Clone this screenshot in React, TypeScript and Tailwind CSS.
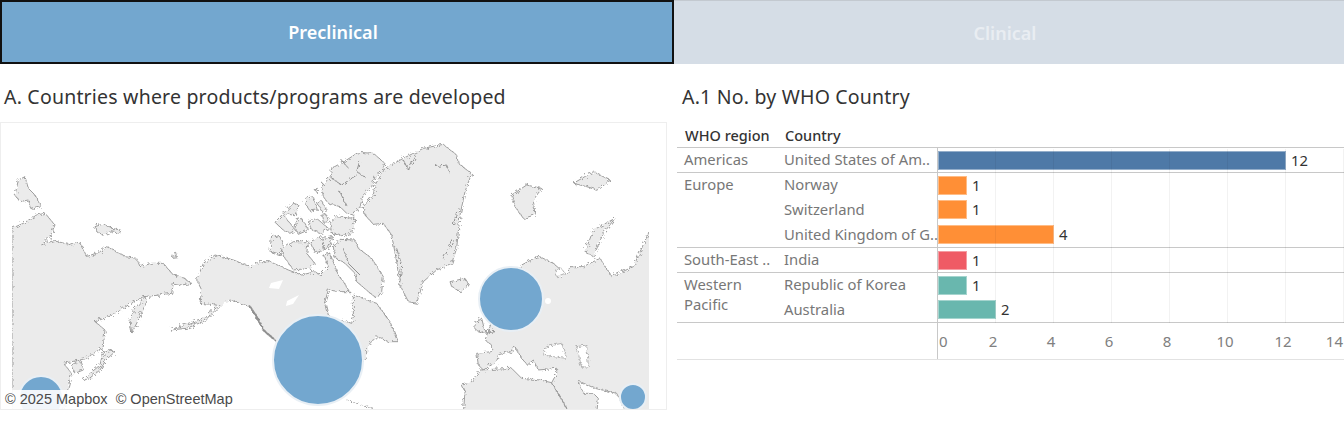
// map traced at 3x, each list in the coordinates of its own crop
const asia = [
  "36,325 70,310 110,285 135,280 165,315 150,350 125,375 160,362 215,375 240,365 260,410 300,395 320,380 350,395 375,410 410,415 420,440 455,430 490,430 520,465 545,470 575,490 545,495 520,490 515,520 480,525 430,530 385,555 340,585 285,605 315,630 310,680 260,715 240,720 190,730 215,760 205,800 190,880 36,880",
  "45,225 55,180 75,170 85,205 105,225 125,260 95,268 85,240 60,245",
  "285,320 310,312 335,325 362,330 360,340 335,335 310,345 290,335",
  "515,405 530,400 532,410 515,412",
  "390,600 400,570 435,530 440,545 415,600 395,640",
  "250,778 300,735 308,700 330,690 345,695 318,720 300,750 262,780",
  "240,720 250,750 225,760 215,735",
  "590,480 610,430 645,405 700,420 750,440 780,425 810,425 865,450 905,465 945,455 960,465 985,440 970,405 990,400 1015,465 1030,485 1050,515 1020,515 985,510 975,545 985,585 1010,600 1040,605 1055,610 1060,590 1060,530 1065,525 1100,540 1130,550 1170,605 1195,665 1165,665 1130,650 1100,680 1100,710 1090,720 1000,760 900,800 850,700 825,660 790,630 750,560 690,540 660,560 620,600 560,625 510,630 620,590 650,555 600,550 605,510",
];

const arctic = [
  "185,155 210,125 215,100 260,75 295,52 340,55 375,85 365,110 345,125 335,155 310,180 300,215 280,240 260,235 240,215 205,205 190,185",
  "310,215 340,180 345,150 375,100 430,70 490,40 550,28 590,60 595,85 635,115 615,170 600,240 590,340 575,385 530,405 490,440 470,505 445,500 420,450 410,380 395,300 370,265 340,268 315,240",
  "137,190 160,185 172,225 150,228 135,205",
  "172,205 185,197 200,225 190,235",
  "165,165 172,160 172,175",
  "45,262 70,235 100,205 117,210 105,240 85,235 75,245 105,285 90,295 70,285",
  "110,255 125,250 145,285 115,298 105,280",
  "145,260 170,250 205,280 185,295 155,285",
  "210,265 225,245 285,250 275,295 245,302 215,295",
  "185,240 200,240 205,260 190,262",
  "35,300 60,305 70,330 60,360 30,350",
  "65,345 100,320 145,320 140,355 165,385 150,400 100,405 75,370",
  "150,320 185,305 190,345 165,355",
  "190,310 220,305 205,340 190,340",
  "220,335 240,313 285,315 295,340 335,370 370,425 365,470 350,490 325,470 290,440 285,415 255,385 225,370",
];

const arcticLines = [
  "215,130 245,150 290,120",
  "240,170 260,215",
  "300,75 290,110 320,130",
  "430,75 445,105 470,60",
  "525,95 560,90 570,115",
  "590,230 580,270",
  "580,315 550,370",
  "410,340 425,390 420,440",
  "250,340 265,385 300,420",
  "240,70 265,100",
];

const europe = [
  "245,-75 295,-102 340,-80 380,-45 390,-70 430,-70 480,-95 515,-40 580,-70 625,-170 640,-170 640,370 560,370 530,310 465,295 420,275 415,275 430,310 460,310 475,325 470,370 390,370 335,278 350,250 350,235 295,240 280,210 262,225 245,205 225,170 215,190 205,185 175,195 170,215 130,240 115,225 110,190 155,185 155,165 135,150 150,110 200,-30",
  "105,100 125,85 135,125 165,125 135,130 105,120",
  "70,370 75,305 65,285 90,280 120,240 215,235 245,265 300,270 335,278 388,370",
  "30,-25 75,-35 88,-15 60,5 35,-10",
  "215,-285 260,-315 305,-305 280,-270 285,-225 250,-215 225,-250",
  "400,-320 460,-355 510,-330 475,-300 440,-310",
  "435,-115 460,-180 525,-215 490,-170 460,-100",
];

const waters = [
  "310,195 320,170 365,160 380,205 340,200",
  "410,170 440,165 445,230 425,232",
  "345,-50 360,-70 375,-50 350,-40",
];

const rows = [
  {
    region: "Americas",
    color: "#4e79a7",
    items: [{ country: "United States of Am..", value: 12 }],
  },
  {
    region: "Europe",
    color: "#ff8f36",
    items: [
      { country: "Norway", value: 1 },
      { country: "Switzerland", value: 1 },
      { country: "United Kingdom of G..", value: 4 },
    ],
  },
  {
    region: "South-East ..",
    color: "#ef5b65",
    items: [{ country: "India", value: 1 }],
  },
  {
    region: "Western Pacific",
    color: "#69b7ae",
    items: [
      { country: "Republic of Korea", value: 1 },
      { country: "Australia", value: 2 },
    ],
  },
];

const ticks = [2, 4, 6, 8, 10, 12];

function WorldMap() {
  const land = { fill: "#ebebeb", stroke: "#909090", strokeWidth: 2.6, strokeLinejoin: "round" as const };
  return (
    <svg viewBox="0 0 665 286" className="block w-[665px] h-[286px]">
      <defs>
        <clipPath id="mapClip">
          <rect x="11" y="0" width="637" height="286" />
        </clipPath>
        <filter id="rough" x="0" y="0" width="665" height="286" filterUnits="userSpaceOnUse">
          <feTurbulence type="fractalNoise" baseFrequency="0.35" numOctaves="3" seed="4" />
          <feDisplacementMap in="SourceGraphic" scale="6" />
        </filter>
      </defs>
      <g clipPath="url(#mapClip)">
        <g filter="url(#rough)">
          <g transform="translate(-1 -3) scale(0.33333)">
            {asia.map((points, i) => (
              <polygon key={i} points={points} {...land} />
            ))}
            <polyline points="750,560 770,590 790,630 825,660" fill="none" stroke="#909090" strokeWidth="6" />
            <polyline points="1040,840 1080,855 1120,865" fill="none" stroke="#909090" strokeWidth="3" strokeDasharray="6 5" />
          </g>
          <g transform="translate(259 12) scale(0.33333)">
            {arctic.map((points, i) => (
              <polygon key={i} points={points} {...land} />
            ))}
            {arcticLines.map((points, i) => (
              <polyline key={i} points={points} fill="none" stroke="#909090" strokeWidth="3" />
            ))}
          </g>
          <g transform="translate(439 167) scale(0.33333)">
            {europe.map((points, i) => (
              <polygon key={i} points={points} {...land} />
            ))}
            {waters.map((points, i) => (
              <polygon key={i} points={points} fill="#ffffff" stroke="#909090" strokeWidth="2" />
            ))}
          </g>
        </g>
        <polygon points="270,160 282,157 278,166 268,165" fill="#ffffff" />
        <polygon points="286,178 298,172 292,181 285,183" fill="#ffffff" />
        <circle cx="547" cy="178" r="3" fill="#ffffff" />
        <circle cx="40" cy="275" r="22" fill="#73a7cf" stroke="#e8eff5" strokeWidth="2" />
        <circle cx="317" cy="237" r="45" fill="#73a7cf" stroke="#e8eff5" strokeWidth="2" />
        <circle cx="510" cy="176" r="32" fill="#73a7cf" stroke="#e8eff5" strokeWidth="2" />
        <circle cx="632" cy="274" r="13" fill="#73a7cf" stroke="#e8eff5" strokeWidth="2" />
      </g>
    </svg>
  );
}

export default function App() {
  return (
    <div className="w-[1344px] h-[432px] bg-white overflow-hidden font-['Noto_Sans',sans-serif]">
      <div className="flex h-16">
        <div className="w-[674px] pr-2 flex items-center justify-center bg-[#73a7cf] border-2 border-[#111111] text-white text-lg font-semibold">
          Preclinical
        </div>
        <div className="flex-1 pr-2 flex items-center justify-center bg-[#d5dde6] border-t border-[#c3c9d0] text-[#e9edf2] text-lg font-semibold">
          Clinical
        </div>
      </div>

      <div className="flex">
        <div className="w-[682px] shrink-0">
          <h2 className="h-[58px] pl-1 pt-[8px] flex items-center text-[19.5px] tracking-[0.2px] text-[#333333]">
            A. Countries where products/programs are developed
          </h2>
          <div className="relative w-[667px] h-[288px] border border-[#eeeeee]">
            <WorldMap />
            <div className="absolute left-[2px] bottom-0 h-[19px] pl-[2px] pr-[3px] flex items-center bg-white/90 text-[14.5px] text-[#4a4a4a] font-['Liberation_Sans',sans-serif]">
              © 2025 Mapbox&nbsp; © OpenStreetMap
            </div>
          </div>
        </div>

        <div className="flex-1">
          <h2 className="h-[58px] pt-[8px] flex items-center text-[19.5px] tracking-[0.2px] text-[#333333]">
            A.1 No. by WHO Country
          </h2>
          <div className="-ml-[5px] relative">
            <div className="h-[26px] pl-2 flex items-end text-[14.5px] font-medium text-[#333333] border-b border-[#c8c8c8]">
              <div className="w-[100px]">WHO region</div>
              <div>Country</div>
            </div>

            {rows.map((group) => (
              <div key={group.region} className="flex border-b border-[#c8c8c8] text-[14.8px] text-[#777777]">
                <div className="w-[107px] shrink-0 pl-[7px] pr-2 leading-5 pt-px">{group.region}</div>
                <div className="flex-1">
                  {group.items.map((item) => (
                    <div key={item.country} className="h-[25px] flex items-center first:h-[24px]">
                      <div className="w-[154px] shrink-0 whitespace-nowrap border-r border-[#c8c8c8] h-full flex items-center pb-px">
                        {item.country}
                      </div>
                      <div className="h-[19px] border border-white/40" style={{ width: item.value * 29, backgroundColor: group.color }} />
                      <span className="ml-[5px] text-[#333333]">{item.value}</span>
                    </div>
                  ))}
                </div>
              </div>
            ))}

            <div className="h-[37px] flex text-[15px] text-[#808080] border-b border-[#e2e2e2]">
              <div className="w-[261px] shrink-0 border-r border-[#c8c8c8]" />
              <div className="flex-1 flex items-center">
                <div className="w-[26px] pl-[1px]">0</div>
                {ticks.map((tick) => (
                  <div key={tick} className="w-[58px] text-center">{tick}</div>
                ))}
                <div className="flex-1 text-right pr-[1px]">14</div>
              </div>
            </div>

            {/* grid lines lie over the rows */}
            <div className="absolute left-[261px] top-[27px] h-[174px] w-[406px] pointer-events-none flex">
              {[0, 1, 2, 3, 4, 5, 6].map((n) => (
                <div key={n} className="w-[58px] h-full border-r border-black/5" />
              ))}
            </div>
          </div>
        </div>
      </div>
    </div>
  );
}
